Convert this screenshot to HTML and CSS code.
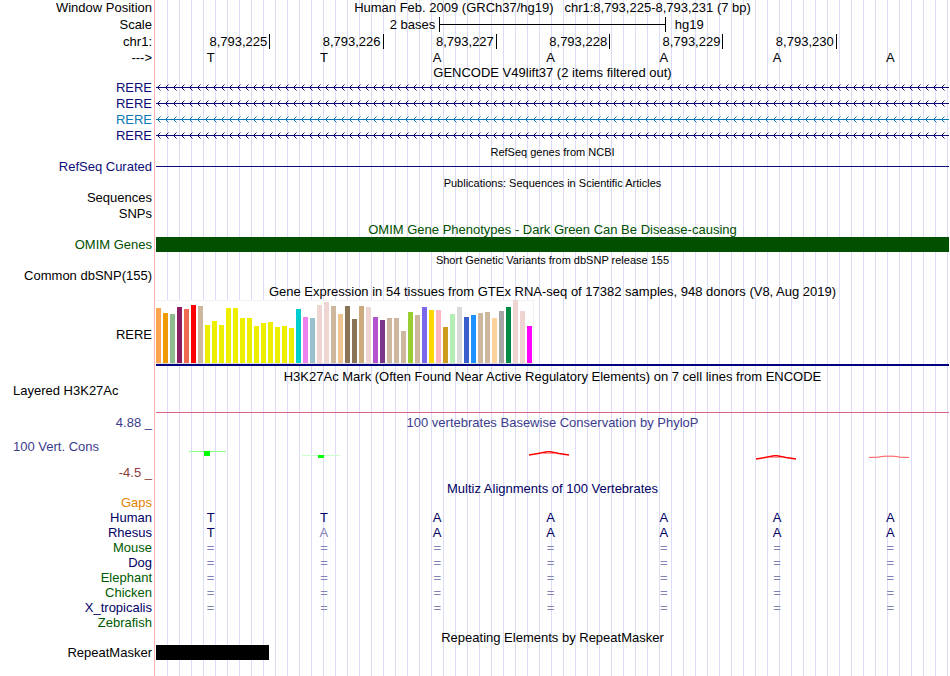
FILE: index.html
```html
<!DOCTYPE html>
<html lang="en">
<head>
  <meta charset="UTF-8">
  <meta name="viewport" content="width=device-width, initial-scale=1.0">
  <title>Human chr1:8,793,225-8,793,231</title>
  <link rel="stylesheet" href="styles.css">
</head>
<body>
  <!-- shared arrow patterns for the minus strand -->
  <svg class="defs" width="0" height="0">
    <defs>
      <pattern id="arrow" width="8" height="16" patternUnits="userSpaceOnUse">
        <path d="M0 7.5H8M4.5 4.5L1.5 7.5L4.5 10.5" fill="none" stroke="#0c0c78"/>
      </pattern>
      <pattern id="arrow_blue" width="8" height="16" patternUnits="userSpaceOnUse">
        <path d="M0 7.5H8M4.5 4.5L1.5 7.5L4.5 10.5" fill="none" stroke="#0c78b4"/>
      </pattern>
    </defs>
  </svg>

  <main class="browser">
    <!-- ruler -->
    <section class="ruler">
      <div class="row">
        <div class="label">Window Position</div>
        <div class="title">Human Feb. 2009 (GRCh37/hg19)&nbsp;&nbsp; chr1:8,793,225-8,793,231 (7 bp)</div>
      </div>
      <div class="row head">
        <div class="label">Scale</div>
        <div class="scale">
          <span class="scale_left">2 bases</span>
          <span class="scale_bar"></span>
          <span class="scale_right">hg19</span>
        </div>
      </div>
      <div class="row">
        <div class="label">chr1:</div>
        <div class="bases positions">
          <span>8,793,225</span><span>8,793,226</span><span>8,793,227</span><span>8,793,228</span><span>8,793,229</span><span>8,793,230</span>
        </div>
      </div>
      <div class="row">
        <div class="label">---&gt;</div>
        <div class="bases letters"><span>T</span><span>T</span><span>A</span><span>A</span><span>A</span><span>A</span><span>A</span></div>
      </div>
    </section>

    <!-- genes -->
    <section>
      <div class="row tight"><h2 class="title">GENCODE V49lift37 (2 items filtered out)</h2></div>
      <div class="row navy"><div class="label">RERE</div><svg class="gene"><rect width="100%" height="16" fill="url(#arrow)"/></svg></div>
      <div class="row navy"><div class="label">RERE</div><svg class="gene"><rect width="100%" height="16" fill="url(#arrow)"/></svg></div>
      <div class="row blue"><div class="label">RERE</div><svg class="gene"><rect width="100%" height="16" fill="url(#arrow_blue)"/></svg></div>
      <div class="row navy"><div class="label">RERE</div><svg class="gene"><rect width="100%" height="16" fill="url(#arrow)"/></svg></div>
    </section>
    <section>
      <div class="row short small"><h2 class="title">RefSeq genes from NCBI</h2></div>
      <div class="row navy"><div class="label">RefSeq Curated</div><div class="thin_line"></div></div>
    </section>
    <section>
      <div class="row short small"><h2 class="title">Publications: Sequences in Scientific Articles</h2></div>
      <div class="row"><div class="label">Sequences</div></div>
      <div class="row"><div class="label">SNPs</div></div>
    </section>
    <section>
      <div class="row short green"><h2 class="title">OMIM Gene Phenotypes - Dark Green Can Be Disease-causing</h2></div>
      <div class="row short green"><div class="label">OMIM Genes</div><div class="block"></div></div>
    </section>
    <section>
      <div class="row small"><h2 class="title">Short Genetic Variants from dbSNP release 155</h2></div>
      <div class="row"><div class="label">Common dbSNP(155)</div></div>
    </section>

    <!-- expression -->
    <section>
      <div class="row"><h2 class="title">Gene Expression in 54 tissues from GTEx RNA-seq of 17382 samples, 948 donors (V8, Aug 2019)</h2></div>
      <div class="row gtex">
        <div class="label">RERE</div>
        <div class="gtex_track"><div class="gtex_bars" id="gtex"></div></div>
      </div>
    </section>
    <section>
      <div class="row"><h2 class="title">H3K27Ac Mark (Often Found Near Active Regulatory Elements) on 7 cell lines from ENCODE</h2></div>
      <div class="row layered"><div class="label left">Layered H3K27Ac</div><div class="signal"></div></div>
    </section>

    <!-- conservation -->
    <section class="violet">
      <div class="row"><div class="label">4.88 _</div><h2 class="title">100 vertebrates Basewise Conservation by PhyloP</h2></div>
      <div class="row cons">
        <div class="cons_labels">
          <div class="label left">100 Vert. Cons</div>
          <div class="label low">-4.5 _</div>
        </div>
        <div class="bases logos">
          <svg width="42" height="48"><path d="M-2 20.5H35" stroke="#8f8"/><path d="M13 20H19V25H13Z" fill="#0f0"/></svg>
          <svg width="42" height="48"><path d="M-2 24.5H36" stroke="#cfc"/><path d="M14 24H20V27H14Z" fill="#0f0"/></svg>
          <span></span>
          <svg width="42" height="48"><path d="M0 24L9 22.5L18 20.8H21L30 22.5L40 24" fill="none" stroke="#f00" stroke-width="1.4"/><path d="M14 22.5H25" stroke="#f99"/></svg>
          <span></span>
          <svg width="42" height="48"><path d="M1 28L10 26.5L19 24.8H22L31 26.5L41 28" fill="none" stroke="#f00" stroke-width="1.4"/><path d="M15 26.5H26" stroke="#f99"/></svg>
          <svg width="42" height="48"><path d="M1 26.4L10 26.2L16 25.2H26L32 26.2L41 26.4" fill="none" stroke="#f55"/></svg>
        </div>
      </div>
    </section>

    <!-- alignment -->
    <section class="multiz">
      <div class="row short"><h2 class="title">Multiz Alignments of 100 Vertebrates</h2></div>
      <div class="row tight orange"><div class="label">Gaps</div></div>
      <div class="row short"><div class="label">Human</div><div class="bases letters"><span>T</span><span>T</span><span>A</span><span>A</span><span>A</span><span>A</span><span>A</span></div></div>
      <div class="row short"><div class="label">Rhesus</div><div class="bases letters"><span>T</span><span class="diff">A</span><span>A</span><span>A</span><span>A</span><span>A</span><span>A</span></div></div>
      <div class="row short"><div class="label alt">Mouse</div><div class="bases letters equal"><span>=</span><span>=</span><span>=</span><span>=</span><span>=</span><span>=</span><span>=</span></div></div>
      <div class="row short"><div class="label">Dog</div><div class="bases letters equal"><span>=</span><span>=</span><span>=</span><span>=</span><span>=</span><span>=</span><span>=</span></div></div>
      <div class="row short"><div class="label alt">Elephant</div><div class="bases letters equal"><span>=</span><span>=</span><span>=</span><span>=</span><span>=</span><span>=</span><span>=</span></div></div>
      <div class="row short"><div class="label alt">Chicken</div><div class="bases letters equal"><span>=</span><span>=</span><span>=</span><span>=</span><span>=</span><span>=</span><span>=</span></div></div>
      <div class="row short"><div class="label">X_tropicalis</div><div class="bases letters equal"><span>=</span><span>=</span><span>=</span><span>=</span><span>=</span><span>=</span><span>=</span></div></div>
      <div class="row short"><div class="label alt">Zebrafish</div></div>
    </section>
    <section>
      <div class="row short"><h2 class="title">Repeating Elements by RepeatMasker</h2></div>
      <div class="row short"><div class="label">RepeatMasker</div><div class="bases"><span class="block"></span></div></div>
    </section>
  </main>

  <script>
    // [height, color] per tissue
    const tissues = [
      [55,"#ffa54f"],[50,"#ee9a00"],[49,"#8fbc8f"],[56,"#8b1c62"],[54,"#ee6a50"],[58,"#ff0000"],[57,"#cdb79e"],
      [38,"#eeee00"],[42,"#eeee00"],[38,"#eeee00"],[55,"#eeee00"],[55,"#eeee00"],[45,"#eeee00"],[45,"#eeee00"],
      [37,"#eeee00"],[40,"#eeee00"],[41,"#eeee00"],[36,"#eeee00"],[37,"#eeee00"],[35,"#eeee00"],
      [54,"#00cdcd"],[46,"#ee82ee"],[45,"#9ac0cd"],[58,"#eed5d2"],[61,"#eed5d2"],[57,"#cdb79e"],[49,"#eec591"],
      [57,"#8b7355"],[44,"#8b7355"],[57,"#cdaa7d"],[56,"#eed5d2"],[46,"#b452cd"],[43,"#7a378b"],[45,"#cdb79e"],
      [45,"#cdb79e"],[32,"#cdb79e"],[51,"#9acd32"],[48,"#cdb79e"],[56,"#7a67ee"],[53,"#ffd700"],[53,"#ffb6c1"],
      [36,"#cd9b1d"],[49,"#b4eeb4"],[56,"#d9d9d9"],[46,"#3a5fcd"],[48,"#1e90ff"],[50,"#cdb79e"],[51,"#cdb79e"],
      [45,"#ffd39b"],[52,"#a6a6a6"],[56,"#008b45"],[63,"#eed5d2"],[52,"#eed5d2"],[37,"#ff00ff"]
    ];
    const gtex = document.querySelector("#gtex");
    for(let i=0 ; i<tissues.length ; i++){
      const bar = document.createElement("span");
      bar.style.height = tissues[i][0] + "px";
      bar.style.background = tissues[i][1];
      gtex.append(bar);
    }
  </script>
</body>
</html>
```
FILE: styles.css
```css
*{
  margin: 0; padding: 0;
  box-sizing: border-box;
}
body{
  background-color: white;
  color: black;
  font-family: "Liberation Sans", Arial, sans-serif;
  font-size: 13px; line-height: 16px;
}
.defs{
  display: block;
}

/* pink border, then a guide line every 12px */
.browser{
  min-height: 100vh;
  padding-right: 1px;
  background:
    linear-gradient(#ffb4b4, #ffb4b4) 154px 0 / 1px 100% no-repeat,
    linear-gradient(white, white) 0 0 / 156px 100% no-repeat,
    repeating-linear-gradient(to right, transparent 0 11px, #dcdcf8 11px 12px);
}

/* rows */
.row{
  display: grid;
  grid-template-columns: 152px 1fr;
  column-gap: 4px;
  height: 16px;
}
.row.head{
  height: 18px; line-height: 18px;
}
.row.short{
  height: 15px; line-height: 16px;
}
.row.tight{
  height: 14px; line-height: 14px;
}
.label{
  grid-column: 1;
  text-align: right;
  white-space: nowrap;
}
.label.left{
  text-align: left;
  padding-left: 13px;
}
.title{
  grid-column: 2;
  font-size: 13px; font-weight: normal;
  text-align: center;
  white-space: nowrap;
}
.small .title{
  font-size: 11px;
}

/* colors */
.navy{ color: #0c0c78; }
.blue{ color: #0c78b4; }
.green{ color: #005000; }
.violet{ color: #3c3c8c; }
.multiz{ color: #000064; }
.orange{ color: #e68200; }
.alt{ color: #005a00; }

/* ruler */
.scale{
  display: grid;
  grid-template-columns: 5fr 4fr 5fr;
}
.scale_left{
  text-align: right;
  padding-right: 4px;
}
.scale_right{
  padding-left: 9px;
}
.scale_bar{
  height: 15px;
  margin-top: 1px;
  border: solid black;
  border-width: 0 1px;
  background: linear-gradient(black, black) 0 7px / 100% 1px no-repeat;
}
.bases{
  display: grid;
  grid-template-columns: repeat(7, 1fr);
}
.positions span{
  height: 15px;
  margin-right: -1px;
  border-right: 1px solid black;
  padding-right: 2px;
  text-align: right;
}
.letters{
  text-align: center;
}
.letters span{
  padding-right: 4px;
}
.diff, .equal{
  color: #8282b4;
}

/* items */
.gene{
  width: 100%; height: 16px;
}
.thin_line{
  height: 1px;
  margin-top: 7px;
  background-color: #0c0c78;
}
.block{
  height: 15px;
  background-color: currentColor;
}

/* GTEx bar graph */
.row.gtex{
  height: 69px; line-height: 70px;
}
.gtex_track{
  height: 66px;
  border-bottom: 2px solid #000080;
}
.gtex_bars{
  display: flex;
  align-items: flex-end;
  gap: 2px;
  width: 378px; height: 64px;
  background-color: white;
  border-top: 1px solid #f0f0f0;
  border-right: 1px solid #f0f0f0;
  border-bottom: 1px solid #dcdcdc;
}
.gtex_bars span{
  width: 5px;
}

.row.layered{
  height: 30px; line-height: 12px;
}
.signal{
  height: 28px;
  border-bottom: 1px solid #dc6482;
}

/* conservation */
.row.cons{
  height: 50px;
}
.cons_labels{
  display: flex;
  flex-direction: column;
  justify-content: space-between;
  padding-top: 8px;
}
.low{
  color: #8c3c3c;
}
.logos{
  justify-items: center;
  padding-right: 4px;
}
.logos svg{
  overflow: visible;
}
```
